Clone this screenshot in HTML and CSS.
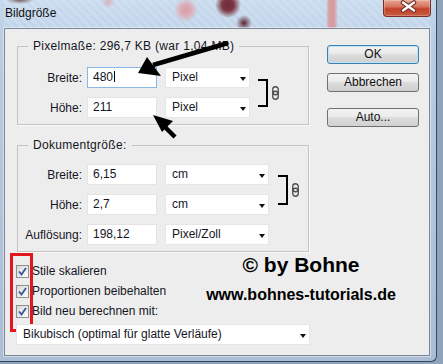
FILE: index.html
```html
<!DOCTYPE html>
<html lang="de">
    <head>
        <meta charset="UTF-8">
        <meta name="viewport" content="width=device-width, initial-scale=1.0">
        <title>Bildgröße</title>
        <link rel="stylesheet" href="styles.css">
    </head>
    <body>
        <div class="window">
            <div class="titlebar">
                <span class="title">Bildgröße</span>
                <div class="close-btn">
                    <svg width="48" height="17" viewBox="0 0 48 17">
                        <path d="M20 3.5 L31 11.5 M31 3.5 L20 11.5" stroke="#6a2a22" stroke-width="4.5" stroke-linecap="round"/>
                        <path d="M20 3.5 L31 11.5 M31 3.5 L20 11.5" stroke="#fff" stroke-width="2.4" stroke-linecap="round"/>
                    </svg>
                </div>
            </div>
            <div class="dialog">
                <div class="top">
                    <div class="groups">
                        <div class="group">
                            <span class="group-title">Pixelmaße: 296,7 KB (war 1,04 MB)</span>
                            <div class="linked first">
                                <div class="rows">
                                    <div class="field-row">
                                        <label>Breite:</label>
                                        <div class="num focus">480<span class="caret"></span></div>
                                        <div class="select w1">Pixel</div>
                                    </div>
                                    <div class="field-row">
                                        <label>Höhe:</label>
                                        <div class="num">211</div>
                                        <div class="select w1">Pixel</div>
                                    </div>
                                </div>
                                <div class="bracket"></div>
                                <svg class="link-icon" width="7" height="14" viewBox="0 0 7 14">
                                    <rect x="0.75" y="0.75" width="5.5" height="8" rx="2.75" fill="none" stroke="#4a4a4a" stroke-width="1.3"/>
                                    <rect x="0.75" y="5.25" width="5.5" height="8" rx="2.75" fill="none" stroke="#4a4a4a" stroke-width="1.3"/>
                                </svg>
                            </div>
                        </div>
                        <div class="group">
                            <span class="group-title">Dokumentgröße:</span>
                            <div class="linked second">
                                <div class="rows">
                                    <div class="field-row">
                                        <label>Breite:</label>
                                        <div class="num">6,15</div>
                                        <div class="select w2">cm</div>
                                    </div>
                                    <div class="field-row">
                                        <label>Höhe:</label>
                                        <div class="num">2,7</div>
                                        <div class="select w2">cm</div>
                                    </div>
                                </div>
                                <div class="bracket tall"></div>
                                <svg class="link-icon" width="7" height="14" viewBox="0 0 7 14">
                                    <rect x="0.75" y="0.75" width="5.5" height="8" rx="2.75" fill="none" stroke="#4a4a4a" stroke-width="1.3"/>
                                    <rect x="0.75" y="5.25" width="5.5" height="8" rx="2.75" fill="none" stroke="#4a4a4a" stroke-width="1.3"/>
                                </svg>
                            </div>
                            <div class="field-row res">
                                <label>Auflösung:</label>
                                <div class="num">198,12</div>
                                <div class="select w2">Pixel/Zoll</div>
                            </div>
                        </div>
                    </div>
                    <div class="buttons">
                        <div class="btn default">OK</div>
                        <div class="btn cancel">Abbrechen</div>
                        <div class="btn auto">Auto...</div>
                    </div>
                </div>
                <div class="bottom">
                    <div class="options">
                        <div class="check-row"><span class="box"><svg width="11" height="11" viewBox="0 0 11 11"><path d="M2 5.5 L4.5 8.5 L9 2" fill="none" stroke="#3a5796" stroke-width="1.8"/></svg></span>Stile skalieren</div>
                        <div class="check-row"><span class="box"><svg width="11" height="11" viewBox="0 0 11 11"><path d="M2 5.5 L4.5 8.5 L9 2" fill="none" stroke="#3a5796" stroke-width="1.8"/></svg></span>Proportionen beibehalten</div>
                        <div class="check-row"><span class="box"><svg width="11" height="11" viewBox="0 0 11 11"><path d="M2 5.5 L4.5 8.5 L9 2" fill="none" stroke="#3a5796" stroke-width="1.8"/></svg></span>Bild neu berechnen mit:</div>
                    </div>
                    <div class="credit">
                        <div class="credit-name">© by Bohne</div>
                        <div class="credit-url">www.bohnes-tutorials.de</div>
                    </div>
                    <div class="marker"></div>
                </div>
                <div class="select wide">Bikubisch (optimal für glatte Verläufe)</div>
            </div>
        </div>
        <svg class="arrows" width="443" height="364" viewBox="0 0 443 364">
            <path d="M228 43 L153 65" stroke="#000" stroke-width="4.5"/>
            <polygon points="138,73 147,57 161,76" fill="#000"/>
            <path d="M175 137 L163 125" stroke="#000" stroke-width="4.5"/>
            <polygon points="153,115 173,121 162,132" fill="#000"/>
        </svg>
    </body>
</html>
```

FILE: styles.css
```css
* {
    box-sizing: border-box;
}
body {
    margin: 0;
    width: 443px;
    height: 364px;
    overflow: hidden;
    position: relative;
    font-family: "Liberation Sans", Arial, sans-serif;
    font-size: 12px;
    color: #15151f;
    background: #8fa3bb;
}
.window {
    width: 437px;
    height: 362px;
    display: flex;
    flex-direction: column;
    padding: 0 6px 5px 4px;
    border-right: 1px solid #3b4858;
    border-bottom: 1px solid #3b4858;
    border-bottom-right-radius: 6px;
    background: linear-gradient(180deg, #c6d8ec 0, #b9cce2 40px, #aabdd4 100%);
}
.titlebar {
    height: 28px;
    display: flex;
    justify-content: space-between;
    align-items: flex-start;
    background:
        radial-gradient(circle at 224px 5px, #6c2a36 0, #7b3844 6px, rgba(123,56,68,0) 13px),
        radial-gradient(circle at 240px 23px, #5a2630 0, rgba(90,38,48,0) 8px),
        radial-gradient(circle at 182px 10px, #d69fa9 0, #dcaab3 5px, rgba(220,170,179,0) 12px),
        radial-gradient(ellipse 14px 4px at 16px 0, #7c5b62 0, rgba(124,91,98,0) 100%),
        radial-gradient(ellipse 7px 6px at 104px 2px, #d8b0b8 0, rgba(216,176,184,0) 100%),
        linear-gradient(90deg, rgba(214,150,154,0) 322px, #d8a0a3 325px, #d59a9e 330px, rgba(214,150,154,0) 334px),
        repeating-linear-gradient(45deg, rgba(255,255,255,0.14) 0 3px, rgba(255,255,255,0) 3px 6px),
        linear-gradient(180deg, #c9dbee, #c1d4ea);
}
.title {
    padding: 6px 0 0 1px;
    line-height: 14px;
    color: #111;
}
.close-btn {
    width: 48px;
    height: 17px;
    margin-right: -1px;
    border: 1px solid #7a2f24;
    border-top: 0;
    border-radius: 0 0 4px 4px;
    background: linear-gradient(180deg, #e8a592 0, #d8765f 40%, #c2432c 55%, #c95a3e 100%);
    box-shadow: inset 0 0 0 1px rgba(255,255,255,0.25);
}
.close-btn svg {
    display: block;
    margin: -1px 0 0 -1px;
}
.dialog {
    flex: 1;
    position: relative;
    background: #ededed;
    border: 1px solid #7c8796;
    box-shadow: 0 0 0 1px rgba(255,255,255,0.45);
    padding: 17px 10px 0 12px;
}
.top {
    display: flex;
    align-items: flex-start;
    gap: 18px;
}
.groups {
    width: 292px;
    display: flex;
    flex-direction: column;
    gap: 20px;
}
.group {
    border: 1px solid #c4c4c4;
    box-shadow: 1px 1px 0 #fafafa;
    padding-bottom: 6px;
}
.group-title {
    display: table;
    margin: -8px 0 0 10px;
    padding: 0 5px;
    line-height: 14px;
    letter-spacing: 0.3px;
    background: #ededed;
}
.linked {
    display: flex;
    align-items: center;
}
.linked.first {
    margin-top: 14px;
}
.linked.second {
    margin-top: 12px;
}
.rows {
    display: flex;
    flex-direction: column;
    gap: 9px;
}
.field-row {
    display: flex;
    align-items: center;
    height: 21px;
}
.field-row.res {
    margin-top: 9px;
}
label {
    width: 64px;
    margin-right: 5px;
    text-align: right;
}
.num {
    width: 70px;
    height: 21px;
    padding-left: 5px;
    line-height: 19px;
    background: #fff;
    border: 1px solid #e4e4e4;
}
.num.focus {
    border-color: #8ab7e4;
}
.caret {
    display: inline-block;
    width: 1px;
    height: 11px;
    margin-left: 1px;
    vertical-align: -1px;
    background: #000;
}
.select {
    position: relative;
    height: 21px;
    margin-left: 8px;
    padding-left: 6px;
    line-height: 19px;
    background: #fff;
    border: 1px solid #e6e6e6;
}
.select::after {
    content: "";
    position: absolute;
    right: 3px;
    top: 9px;
    border-left: 3.5px solid transparent;
    border-right: 3.5px solid transparent;
    border-top: 4px solid #111;
}
.w1 {
    width: 85px;
}
.w2 {
    width: 104px;
}
.select.wide {
    width: 294px;
    margin: 3px 0 0 -1px;
}
.bracket {
    width: 10px;
    height: 28px;
    margin-left: 8px;
    border: 2px solid #000;
    border-left: 0;
}
.bracket.tall {
    height: 30px;
    margin-left: 9px;
}
.link-icon {
    margin-left: 4px;
}
.buttons {
    width: 92px;
    margin-top: -1px;
    display: flex;
    flex-direction: column;
}
.btn {
    height: 19px;
    line-height: 17px;
    text-align: center;
    color: #111;
    border: 1px solid #707070;
    border-radius: 3px;
    background: linear-gradient(180deg, #f3f3f3 0, #ebebeb 45%, #dddddd 50%, #d0d0d0 100%);
}
.btn.default {
    border-color: #3c7fb1;
    box-shadow: inset 0 0 0 1px #bfe4f7;
}
.btn.cancel {
    margin-top: 9px;
}
.btn.auto {
    margin-top: 16px;
}
.bottom {
    position: relative;
    display: flex;
    margin-top: 1px;
}
.options {
    width: 170px;
    margin-left: -1px;
    padding-top: 8px;
}
.check-row {
    display: flex;
    align-items: center;
    gap: 3px;
    height: 20px;
    white-space: nowrap;
}
.box {
    width: 13px;
    height: 13px;
    flex: none;
    border: 1px solid #8e8f8f;
    background: linear-gradient(135deg, #dadada, #fbfbfb);
}
.box svg {
    display: block;
}
.credit {
    width: 230px;
    text-align: center;
    font-weight: bold;
    color: #000;
}
.credit-name {
    font-size: 21px;
    line-height: 24px;
}
.credit-url {
    font-size: 16px;
    line-height: 20px;
    margin-top: 8px;
}
.marker {
    position: absolute;
    left: -7px;
    top: 0;
    width: 23px;
    height: 79px;
    border: 3px solid #e2161d;
}
.arrows {
    position: absolute;
    top: 0;
    left: 0;
    pointer-events: none;
}
```
